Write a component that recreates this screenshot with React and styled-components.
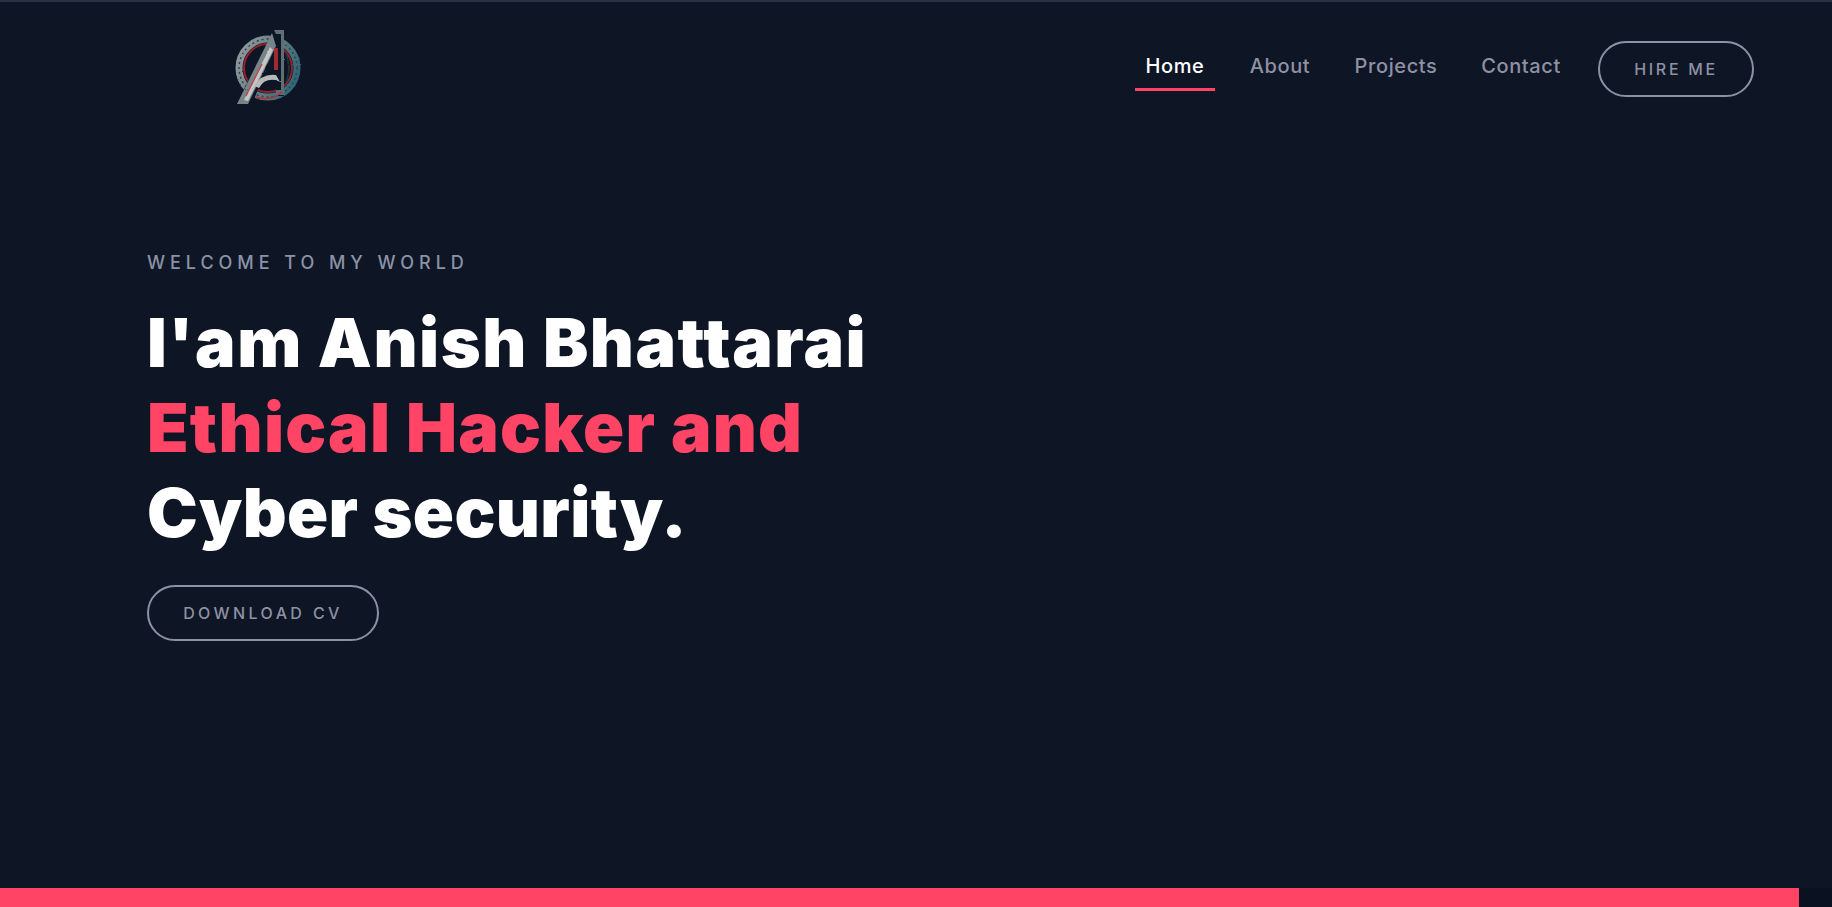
import React from 'react'
import styled, { createGlobalStyle } from 'styled-components'

const GlobalStyle = createGlobalStyle`
  html, body {
    margin: 0;
    padding: 0;
    height: 100%;
    overflow: hidden;
    background: #0e1525;
  }
  * { box-sizing: border-box; }
`;

const Page = styled.div`
  height: 100vh;
  display: flex;
  flex-direction: column;
  border-top: 2px solid #2b3142;
  background: #0e1525;
  font-family: Inter, "Liberation Sans", sans-serif;
`;

const Header = styled.header`
  height: 124px;
  display: flex;
  justify-content: space-between;
  padding: 24px 78px 0 232px;
`;

const Logo = styled.svg`
  width: 72px;
  height: 80px;
  display: block;
`;

const Nav = styled.nav`
  display: flex;
  align-items: flex-start;
  height: 72px;
  padding-top: 15px;
`;

const NavItem = styled.a`
  display: block;
  height: 50px;
  padding-top: 11px;
  margin-right: ${p => p.$gap}px;
  width: ${p => p.$width}px;
  text-align: center;
  font-size: 20px;
  line-height: 28px;
  font-weight: 500;
  letter-spacing: 0.6px;
  white-space: nowrap;
  color: ${p => (p.$active ? '#ffffff' : '#8e91a4')};
  border-bottom: 3px solid ${p => (p.$active ? '#ff4466' : 'transparent')};
`;

const OutlineButton = styled.a`
  display: flex;
  align-items: center;
  justify-content: center;
  width: ${p => p.$width}px;
  height: 56px;
  border: 2px solid #8e91a4;
  border-radius: 28px;
  color: #8e91a4;
  font-size: 16px;
  font-weight: 500;
  letter-spacing: ${p => p.$spacing}px;
  white-space: nowrap;
`;

const Hero = styled.main`
  flex: 1;
  padding: 125px 0 0 147px;
`;

const Eyebrow = styled.div`
  font-size: 18px;
  line-height: 24px;
  font-weight: 500;
  letter-spacing: 4.95px;
  color: #8b92a5;
  white-space: nowrap;
`;

const Heading = styled.h1`
  margin: 25px 0 30px;
  font-size: 68px;
  line-height: 85px;
  font-weight: 900;
  color: #ffffff;
  white-space: nowrap;
`;

const HeadingLine = styled.span`
  display: block;
  letter-spacing: ${p => p.$spacing}px;
  color: ${p => (p.$accent ? '#ff4466' : '#ffffff')};
`;

const BottomStrip = styled.div`
  height: 19px;
  background: #0a1120;
`;

const BottomBar = styled.div`
  width: 1799px;
  height: 100%;
  background: #ff4466;
`;

const AvengersLogo = () => (
  <Logo viewBox="0 0 72 80">
    <defs>
      <linearGradient id="ring" x1="0" y1="0.3" x2="1" y2="0.7">
        <stop offset="0" stopColor="#8b979b" />
        <stop offset="0.45" stopColor="#6b7f86" />
        <stop offset="1" stopColor="#2e6675" />
      </linearGradient>
      <filter id="rough" x="-10%" y="-10%" width="120%" height="120%">
        <feTurbulence type="fractalNoise" baseFrequency="0.6" numOctaves="2" seed="4" />
        <feDisplacementMap in="SourceGraphic" scale="1.8" />
      </filter>
    </defs>
    <g filter="url(#rough)">
      <circle cx="36" cy="42" r="29" fill="none" stroke="url(#ring)" strokeWidth="7" />
      <circle cx="36" cy="42" r="29" fill="none" stroke="#31424a" strokeWidth="1.4" strokeDasharray="2 3" />
      <circle cx="36" cy="42" r="24" fill="none" stroke="#8f2229" strokeWidth="2" />
      <path d="M4 79 L42 4 H52 V70 H44 V58 H28 L21 76 Z" fill="#0e1525" />
      <path d="M5 78 L40 7 L44 20 L16 78 Z" fill="#77858a" />
      <path d="M12 74 L38 21 L41 24 L16 75 Z" fill="#c3c8c6" />
      <path d="M14 70 L30 38" stroke="#c4343c" strokeWidth="1.2" fill="none" />
      <path d="M42 4 H52 V69 H44 V64 H49 V8 H44 Z" fill="#5c7076" />
      <path d="M22 60 Q30 47 44 49 L48 56 L44 54 Q32 52 27 62 Z" fill="#b6bbba" />
      <path d="M42 22 L46 22 L46 44 L42 44 Z" fill="#a12a32" />
      <path d="M34 40 L42 30 V46 H33 Z" fill="#0e1525" />
      <path d="M24 71 Q38 76 50 66" stroke="#b0313a" strokeWidth="1.6" fill="none" />
      <path d="M54 28 Q60 42 54 56" stroke="#1d3640" strokeWidth="1.6" fill="none" />
    </g>
  </Logo>
);

const App = () => {
  return (
    <Page>
      <GlobalStyle />
      <Header>
        <AvengersLogo />
        <Nav>
          <NavItem $active $gap={25} $width={80}>Home</NavItem>
          <NavItem $gap={26} $width={80}>About</NavItem>
          <NavItem $gap={25} $width={100}>Projects</NavItem>
          <NavItem $gap={27} $width={100}>Contact</NavItem>
          <OutlineButton $width={156} $spacing={2.7}>HIRE ME</OutlineButton>
        </Nav>
      </Header>
      <Hero>
        <Eyebrow>WELCOME TO MY WORLD</Eyebrow>
        <Heading>
          <HeadingLine $spacing={1.5}>I'am Anish Bhattarai</HeadingLine>
          <HeadingLine $accent $spacing={1.2}>Ethical Hacker and</HeadingLine>
          <HeadingLine $spacing={0.4}>Cyber security.</HeadingLine>
        </Heading>
        <OutlineButton $width={232} $spacing={3.4}>DOWNLOAD CV</OutlineButton>
      </Hero>
      <BottomStrip>
        <BottomBar />
      </BottomStrip>
    </Page>
  );
}

export default App
